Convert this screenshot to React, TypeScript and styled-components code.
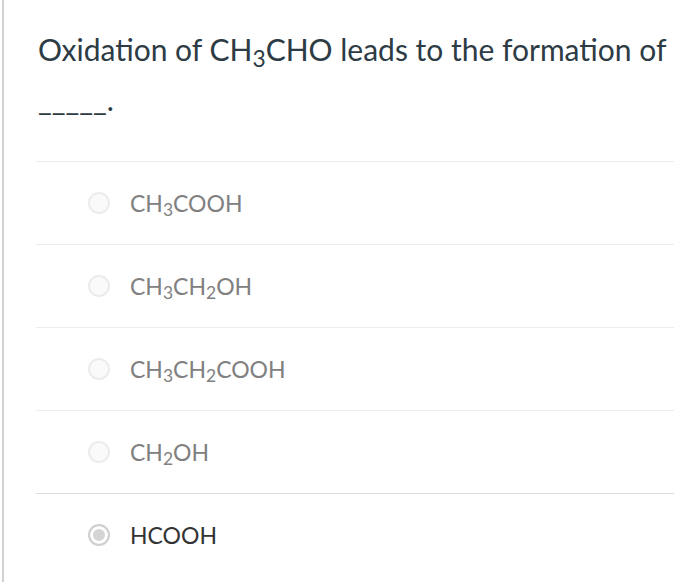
import React from 'react';
import styled, { createGlobalStyle } from 'styled-components';

const GlobalStyle = createGlobalStyle`
  html, body {
    margin: 0;
    padding: 0;
    background: #fff;
  }
`;

const Page = styled.div`
  margin-left: 2px;
  min-height: 582px;
  border-left: 2px solid #cfd3d6;
  font-family: Lato, 'Liberation Sans', sans-serif;
  box-sizing: border-box;
  padding: 24px 26px 0 32px;
`;

const Question = styled.div`
  font-size: 30px;
  line-height: 50px;
  color: #2d3b45;
  margin: 0 0 37px 2px;
`;

const Sub = styled.sub`
  font-size: 0.76em;
  vertical-align: -0.25em;
  line-height: 0;
`;

const AnswerList = styled.div`
  display: flex;
  flex-direction: column;
`;

const Answer = styled.div<{ $strong?: boolean }>`
  display: flex;
  align-items: center;
  gap: 20px;
  height: 82px;
  padding-left: 52px;
  border-top: 1px solid ${(p) => (p.$strong ? '#dcdcdc' : '#ececec')};
`;

const Radio = styled.span<{ $checked?: boolean }>`
  width: 18px;
  height: 18px;
  border-radius: 50%;
  border: 2px solid ${(p) => (p.$checked ? '#d0d0d0' : '#ececec')};
  background: ${(p) => (p.$checked ? '#d4d4d4' : '#fafafa')};
  box-shadow: ${(p) => (p.$checked ? 'inset 0 0 0 3px #fff' : 'none')};
`;

const Label = styled.span<{ $checked?: boolean }>`
  font-size: 23px;
  color: ${(p) => (p.$checked ? '#333' : '#808080')};
`;

const answers: { label: React.ReactNode; checked?: boolean }[] = [
  { label: <>CH<Sub>3</Sub>COOH</> },
  { label: <>CH<Sub>3</Sub>CH<Sub>2</Sub>OH</> },
  { label: <>CH<Sub>3</Sub>CH<Sub>2</Sub>COOH</> },
  { label: <>CH<Sub>2</Sub>OH</> },
  { label: <>HCOOH</>, checked: true },
];

const App: React.FC = () => {
  return (
    <>
      <GlobalStyle />
      <Page>
        <Question>
          Oxidation of CH<Sub>3</Sub>CHO leads to the formation of
          <br />
          _____.
        </Question>
        <AnswerList>
          {answers.map((a, i) => (
            <Answer key={i} $strong={a.checked}>
              <Radio $checked={a.checked} />
              <Label $checked={a.checked}>{a.label}</Label>
            </Answer>
          ))}
        </AnswerList>
      </Page>
    </>
  );
};

export default App;
